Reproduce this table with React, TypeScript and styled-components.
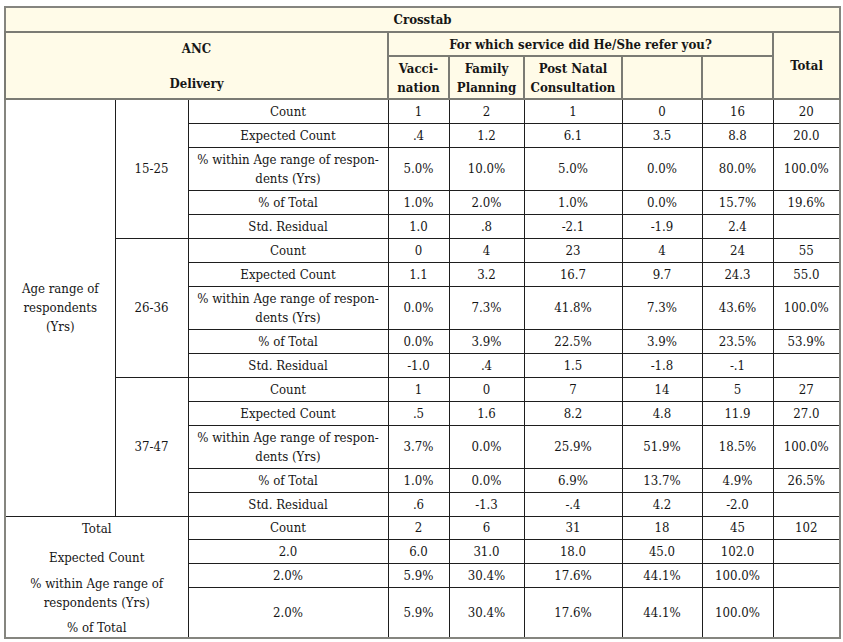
import React from "react";
import styled, { createGlobalStyle } from "styled-components";

const Global = createGlobalStyle`
  html, body { margin: 0; padding: 0; background: #ffffff; }
  body { font-family: "DejaVu Serif Condensed", "DejaVu Serif", "Liberation Serif", serif; font-stretch: condensed; color: #161616; }
`;

const Page = styled.div`
  padding: 6px 0 0 4px;
`;

const Table = styled.table`
  width: 835px;
  table-layout: fixed;
  border-collapse: collapse;
  border: 2px solid #85857f;
  font-size: 13.1px;
  line-height: 19px;
`;

const Col = styled.col<{ $w: number }>`
  width: ${(p) => p.$w}px;
`;

const HeadRow = styled.tr<{ $h: number }>`
  height: ${(p) => p.$h}px;
`;

const TitleCell = styled.th`
  background: #fffbe8;
  font-weight: bold;
  text-align: center;
  padding: 0;
  border-bottom: 2px solid #7b7b74;
`;

const HeadCell = styled.th`
  background: #fffbe8;
  font-weight: bold;
  text-align: center;
  vertical-align: middle;
  padding: 0;
  border: 2px solid #7b7b74;
`;

const AncCell = styled(HeadCell)`
  vertical-align: top;
`;

const AncLine = styled.div<{ $mt: number }>`
  margin-top: ${(p) => p.$mt}px;
`;

const Row = styled.tr<{ $h: number }>`
  height: ${(p) => p.$h}px;
`;

const Cell = styled.td`
  text-align: center;
  vertical-align: middle;
  padding: 0;
  border: 1px solid #1e1e1e;
`;

const SideCell = styled(Cell)`
  border-left: 2px solid #85857f;
`;

const TotalLabelCell = styled(SideCell)`
  vertical-align: top;
`;

const StackLine = styled.div<{ $mt: number }>`
  margin-top: ${(p) => p.$mt}px;
`;

const pct = (
  <>
    % within Age range of respon-
    <br />
    dents (Yrs)
  </>
);

type Line = [React.ReactNode, string, string, string, string, string, string];

const groups: { range: string; rows: Line[] }[] = [
  {
    range: "15-25",
    rows: [
      ["Count", "1", "2", "1", "0", "16", "20"],
      ["Expected Count", ".4", "1.2", "6.1", "3.5", "8.8", "20.0"],
      [pct, "5.0%", "10.0%", "5.0%", "0.0%", "80.0%", "100.0%"],
      ["% of Total", "1.0%", "2.0%", "1.0%", "0.0%", "15.7%", "19.6%"],
      ["Std. Residual", "1.0", ".8", "-2.1", "-1.9", "2.4", ""],
    ],
  },
  {
    range: "26-36",
    rows: [
      ["Count", "0", "4", "23", "4", "24", "55"],
      ["Expected Count", "1.1", "3.2", "16.7", "9.7", "24.3", "55.0"],
      [pct, "0.0%", "7.3%", "41.8%", "7.3%", "43.6%", "100.0%"],
      ["% of Total", "0.0%", "3.9%", "22.5%", "3.9%", "23.5%", "53.9%"],
      ["Std. Residual", "-1.0", ".4", "1.5", "-1.8", "-.1", ""],
    ],
  },
  {
    range: "37-47",
    rows: [
      ["Count", "1", "0", "7", "14", "5", "27"],
      ["Expected Count", ".5", "1.6", "8.2", "4.8", "11.9", "27.0"],
      [pct, "3.7%", "0.0%", "25.9%", "51.9%", "18.5%", "100.0%"],
      ["% of Total", "1.0%", "0.0%", "6.9%", "13.7%", "4.9%", "26.5%"],
      ["Std. Residual", ".6", "-1.3", "-.4", "4.2", "-2.0", ""],
    ],
  },
];

const rowHeights = [24, 24, 43, 24, 24];

const totalRows: { h: number; cells: string[] }[] = [
  { h: 23, cells: ["Count", "2", "6", "31", "18", "45", "102"] },
  { h: 24, cells: ["2.0", "6.0", "31.0", "18.0", "45.0", "102.0", ""] },
  { h: 24, cells: ["2.0%", "5.9%", "30.4%", "17.6%", "44.1%", "100.0%", ""] },
  { h: 50, cells: ["2.0%", "5.9%", "30.4%", "17.6%", "44.1%", "100.0%", ""] },
];

const widths = [110, 73, 200, 61, 75, 98, 80, 71, 67];

export default function App() {
  return (
    <Page>
      <Global />
      <Table>
        <colgroup>
          {widths.map((w, i) => (
            <Col key={i} $w={w} />
          ))}
        </colgroup>
        <thead>
          <HeadRow $h={25}>
            <TitleCell colSpan={9}>Crosstab</TitleCell>
          </HeadRow>
          <HeadRow $h={24}>
            <AncCell colSpan={3} rowSpan={2}>
              <AncLine $mt={6}>ANC</AncLine>
              <AncLine $mt={16}>Delivery</AncLine>
            </AncCell>
            <HeadCell colSpan={5}>For which service did He/She refer you?</HeadCell>
            <HeadCell rowSpan={2}>Total</HeadCell>
          </HeadRow>
          <HeadRow $h={43}>
            <HeadCell>
              Vacci-
              <br />
              nation
            </HeadCell>
            <HeadCell>
              Family
              <br />
              Planning
            </HeadCell>
            <HeadCell>
              Post Natal
              <br />
              Consultation
            </HeadCell>
            <HeadCell />
            <HeadCell />
          </HeadRow>
        </thead>
        <tbody>
          {groups.map((g, gi) =>
            g.rows.map((r, ri) => (
              <Row key={`${gi}-${ri}`} $h={rowHeights[ri]}>
                {gi === 0 && ri === 0 && (
                  <SideCell rowSpan={15}>
                    Age range of
                    <br />
                    respondents
                    <br />
                    (Yrs)
                  </SideCell>
                )}
                {ri === 0 && <Cell rowSpan={5}>{g.range}</Cell>}
                {r.map((c, ci) => (
                  <Cell key={ci}>{c}</Cell>
                ))}
              </Row>
            ))
          )}
          {totalRows.map((t, ti) => (
            <Row key={`t${ti}`} $h={t.h}>
              {ti === 0 && (
                <TotalLabelCell colSpan={2} rowSpan={4}>
                  <StackLine $mt={2}>Total</StackLine>
                  <StackLine $mt={10}>Expected Count</StackLine>
                  <StackLine $mt={7}>
                    % within Age range of
                    <br />
                    respondents (Yrs)
                  </StackLine>
                  <StackLine $mt={6}>% of Total</StackLine>
                </TotalLabelCell>
              )}
              {t.cells.map((c, ci) => (
                <Cell key={ci}>{c}</Cell>
              ))}
            </Row>
          ))}
        </tbody>
      </Table>
    </Page>
  );
}
